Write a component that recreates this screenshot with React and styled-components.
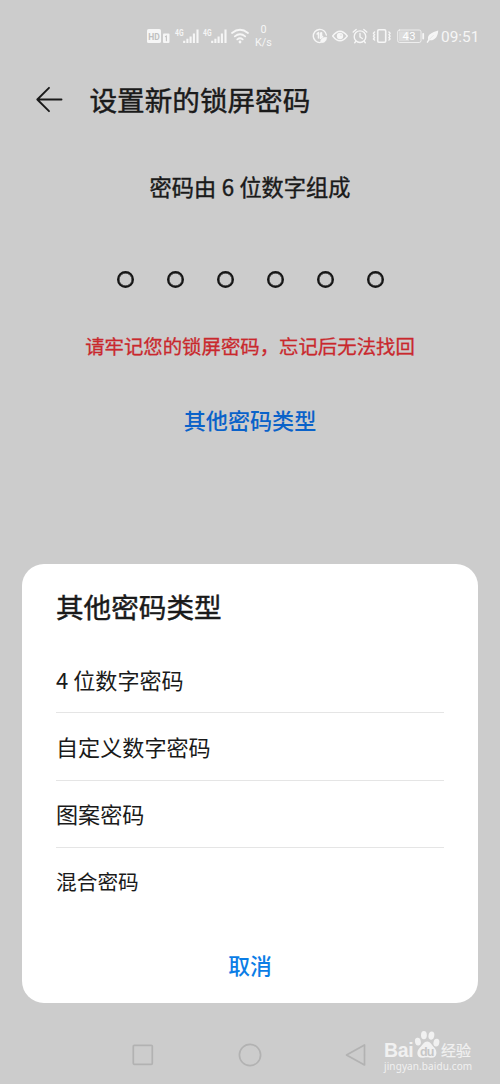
import React from "react";
import styled, { createGlobalStyle } from "styled-components";

const Global = createGlobalStyle`
  * { box-sizing: border-box; }
  body { margin: 0; background: #ccc; }
`;

const Screen = styled.div`
  position: relative;
  display: flex;
  flex-direction: column;
  width: 500px;
  height: 1084px;
  overflow: hidden;
  background: #ccc;
  color: #1a1a1a;
  font-family: "Noto Sans CJK SC", "Noto Sans", sans-serif;
`;

const StatusBar = styled.header`
  display: flex;
  align-items: center;
  height: 72px;
  padding-left: 147px;
  color: #f6f6f6;
  font-family: Roboto, sans-serif;
`;

const Icon = styled.svg`
  display: block;
  flex: none;
  margin-right: ${(p) => p.$gap || 0}px;
  overflow: visible;
  fill: none;
  stroke: currentColor;
  stroke-width: ${(p) => p.$weight || 1.4};
  stroke-linecap: round;
  stroke-linejoin: round;
`;

const Speed = styled.div`
  display: flex;
  flex-direction: column;
  align-items: center;
  width: 17px;
  margin: 1px 40px 0 6px;
  font-size: 10.8px;
  line-height: 12.5px;
`;

const Clock = styled.time`
  font-size: 15.4px;
  line-height: 20px;
  padding-top: 1px;
  white-space: nowrap;
`;

const TitleBar = styled.div`
  display: flex;
  align-items: center;
  height: 56px;
  padding: 0 0 1px 36px;
`;

const PageTitle = styled.h1`
  margin: -1px 0 0 26.5px;
  font-size: 27.6px;
  line-height: 40px;
  font-weight: 400;
  -webkit-text-stroke: 0.45px currentColor;
`;

const Form = styled.main`
  display: flex;
  flex-direction: column;
  align-items: center;
  height: 436px;
  padding-top: 42px;
`;

const Prompt = styled.p`
  margin: 0;
  font-size: 22.2px;
  line-height: 32px;
  font-weight: 400;
  -webkit-text-stroke: 0.4px currentColor;
  word-spacing: 0.5px;
`;

const Dots = styled.div`
  display: flex;
  gap: 33px;
  margin-top: 69px;
`;

const Dot = styled.i`
  width: 17px;
  height: 17px;
  border: 2px solid #151515;
  border-radius: 50%;
  box-shadow: inset 0 0 0 0.5px #151515;
`;

const Warning = styled.p`
  margin: 43px 0 0;
  color: #c9282d;
  font-size: 19.4px;
  line-height: 30px;
  font-weight: 400;
  -webkit-text-stroke: 0.3px currentColor;
  white-space: nowrap;
`;

const TypeLink = styled.a`
  margin-top: 42px;
  color: #0a62c9;
  font-size: 22.1px;
  line-height: 32px;
  font-weight: 500;
`;

const Sheet = styled.section`
  display: flex;
  flex-direction: column;
  height: 439px;
  margin: 0 22px;
  padding: 22px 34px 0;
  border-radius: 22px;
  background: #fff;
`;

const SheetTitle = styled.h2`
  margin: 0 0 20px;
  font-size: 27.6px;
  line-height: 40px;
  font-weight: 400;
  -webkit-text-stroke: 0.45px currentColor;
`;

const Option = styled.div`
  display: flex;
  align-items: center;
  height: 67.3px;
  padding-bottom: 1px;
  border-bottom: 1px solid ${(p) => (p.$last ? "transparent" : "#e5e5e5")};
  font-size: ${(p) => (p.$last ? 20.7 : 22.1)}px;
  line-height: 32px;
`;

const Cancel = styled.button`
  align-self: center;
  margin: 34px 0 0;
  padding: 0;
  border: 0;
  background: none;
  color: #0b7de6;
  font: 500 21.8px/32px "Noto Sans CJK SC", sans-serif;
`;

const NavBar = styled.nav`
  display: flex;
  align-items: center;
  height: 81px;
  padding: 23px 0 0 132px;
  color: #b2b2b2;
`;

const Watermark = styled.div`
  position: absolute;
  left: 384px;
  top: 1029px;
  width: 92px;
  color: #f1f1f1;
`;

const Brand = styled.div`
  display: flex;
  align-items: flex-end;
  height: 31px;
  font-family: "Liberation Sans", sans-serif;
`;

const Bai = styled.span`
  width: 30px;
  font-size: 19.5px;
  line-height: 20px;
  font-weight: 700;
  letter-spacing: -0.4px;
`;

const Jingyan = styled.span`
  font: 400 15px/20px "Noto Sans CJK SC", sans-serif;
  -webkit-text-stroke: 0.2px currentColor;
`;

const Site = styled.div`
  font: 10px/13px "Noto Sans", sans-serif;
  letter-spacing: 0.1px;
  white-space: nowrap;
`;

const Signal = ({ gap }) => (
  <Icon width="25" height="16" $gap={gap}>
    <text x="0" y="8" fontSize="9.2" fontWeight="700" fill="currentColor" stroke="none" textLength="8.5" lengthAdjust="spacingAndGlyphs">4G</text>
    <path d="M9.2 15v-2.2M12.4 15v-4.2M15.6 15V8.5M18.9 15V5.5M22.5 15V1.5" strokeWidth="2.1" strokeLinecap="butt" />
  </Icon>
);

const options = ["4 位数字密码", "自定义数字密码", "图案密码", "混合密码"];

export default function App() {
  return (
    <Screen>
      <Global />
      <StatusBar>
        <Icon width="23" height="16" $gap={5}>
          <rect x="0" y="1" width="14" height="14" rx="1.6" fill="currentColor" stroke="none" />
          <text x="1.3" y="11.6" fontSize="9.8" fontWeight="700" fill="#c0c0c0" stroke="none" textLength="11.5" lengthAdjust="spacingAndGlyphs">HD</text>
          <rect x="16" y="5.5" width="6.5" height="9.5" rx="1" fill="currentColor" stroke="none" />
          <path d="M18.4 8.6l1-.7v4.8" stroke="#c4c4c4" strokeWidth="1.1" />
        </Icon>
        <Signal gap={3} />
        <Signal gap={3} />
        <Icon width="18" height="16" $weight={1.8}>
          <path d="M1 5Q9-1.4 17 5M3.8 8.4Q9 4 14.2 8.4M6.3 11.4Q9 9.2 11.7 11.4" />
          <circle cx="9" cy="14" r="1.4" fill="currentColor" stroke="none" />
        </Icon>
        <Speed><span>0</span><span>K/s</span></Speed>
        <Icon width="16" height="16" $gap={4}>
          <path d="M14.4 7A6.6 6.6 0 1 0 8 14.6M5 6l1.4-1.4V10M8.4 5v5.5L10.7 8.6M9.6 4.8v3" />
          <path d="M8.5 14.5c0-4 2.5-5 6.2-5.2-.2 3.2-2 6-6.2 5.2z" fill="currentColor" strokeWidth=".6" />
        </Icon>
        <Icon width="16" height="16" $gap={4}>
          <path d="M.7 8Q8-1.6 15.3 8 8 17.6 .7 8z" />
          <circle cx="8" cy="8" r="3.2" fill="currentColor" stroke="none" />
          <circle cx="9" cy="7" r=".6" fill="#ccc" stroke="none" />
        </Icon>
        <Icon width="16" height="16" $gap={4}>
          <circle cx="8" cy="8.7" r="5.8" />
          <path d="M8 5.5V9l2.3 1.5M1.2 4l3-2.5M14.8 4l-3-2.5M3.9 13.2l-1.2 1.5M12.1 13.2l1.2 1.5" />
        </Icon>
        <Icon width="20" height="16" $gap={5}>
          <rect x="5.7" y="1.7" width="8" height="12.6" rx="1.2" strokeWidth="1.6" />
          <path d="M2.6 4l-1.2 1.2 1.2 1.4-1.2 1.5 1.2 1.4-1.2 1.5 1.2 1M16.9 4l1.2 1.2-1.2 1.4 1.2 1.5-1.2 1.4 1.2 1.5-1.2 1" />
        </Icon>
        <Icon width="28" height="16" $gap={2}>
          <rect x=".7" y="2" width="23.3" height="12.5" rx="1.8" strokeWidth="1" opacity=".8" />
          <rect x="2" y="3.3" width="10" height="9.9" fill="currentColor" stroke="none" opacity=".35" />
          <text x="5.6" y="12.2" fontSize="11.2" fontWeight="400" fill="#fff" stroke="none" textLength="13">43</text>
          <path d="M26.2 5.8v4.8" strokeWidth="1.8" />
        </Icon>
        <Icon width="12" height="16" $gap={2}>
          <path d="M1.2 12C-.3 6 5 4.6 11.2 2.4c-.2 6-3.3 11-10 9.6z" fill="currentColor" stroke="none" />
          <path d="M.4 14.2l2-3" />
          <path d="M2.8 11l3.6-3.6" stroke="#dcdcdc" strokeWidth=".6" />
        </Icon>
        <Clock>09:51</Clock>
      </StatusBar>

      <TitleBar>
        <Icon width="27" height="26" $weight={1.9}>
          <path d="M25.5 12.5H1.3M13 .8L1.3 12.5 13 24.2" />
        </Icon>
        <PageTitle>设置新的锁屏密码</PageTitle>
      </TitleBar>

      <Form>
        <Prompt>密码由 6 位数字组成</Prompt>
        <Dots>{Array.from({ length: 6 }, (_, i) => <Dot key={i} />)}</Dots>
        <Warning>请牢记您的锁屏密码，忘记后无法找回</Warning>
        <TypeLink>其他密码类型</TypeLink>
      </Form>

      <Sheet>
        <SheetTitle>其他密码类型</SheetTitle>
        {options.map((label, i) => (
          <Option key={label} $last={i === options.length - 1}>{label}</Option>
        ))}
        <Cancel>取消</Cancel>
      </Sheet>

      <NavBar>
        <Icon width="22" height="22" $gap={84} $weight={1.7}><rect x="1.3" y="1.3" width="19" height="19" rx="1" /></Icon>
        <Icon width="24" height="24" $gap={83} $weight={1.7}><circle cx="12" cy="12" r="10.6" /></Icon>
        <Icon width="21" height="22" $weight={1.7}><path d="M19.5 1v20L1.5 11z" /></Icon>
      </NavBar>

      <Watermark>
        <Brand>
          <Bai>Bai</Bai>
          <Icon width="27" height="31">
            <g fill="currentColor" stroke="none">
              <ellipse cx="3.9" cy="12.6" rx="2.9" ry="3.9" transform="rotate(-12 3.9 12.6)" />
              <ellipse cx="9.9" cy="6.2" rx="2.9" ry="4.1" />
              <ellipse cx="17.4" cy="6.6" rx="2.9" ry="4.1" transform="rotate(10 17.4 6.6)" />
              <ellipse cx="22.4" cy="13.6" rx="2.9" ry="3.9" transform="rotate(12 22.4 13.6)" />
              <path d="M13.2 12.5c3 0 4.5 3.6 7 6 3.5 3.4 3 10.3-2.5 10.3-2 0-2.7-.5-4.5-.5s-3 .5-5 .5c-6 0-6-7-2.2-10.3 2.7-2.4 4-6 7.2-6z" />
            </g>
            <text x="6" y="26.6" fontSize="12.5" fontWeight="700" fill="#c6c6c6" stroke="none" textLength="14.5">du</text>
          </Icon>
          <Jingyan>经验</Jingyan>
        </Brand>
        <Site>jingyan.baidu.com</Site>
      </Watermark>
    </Screen>
  );
}
